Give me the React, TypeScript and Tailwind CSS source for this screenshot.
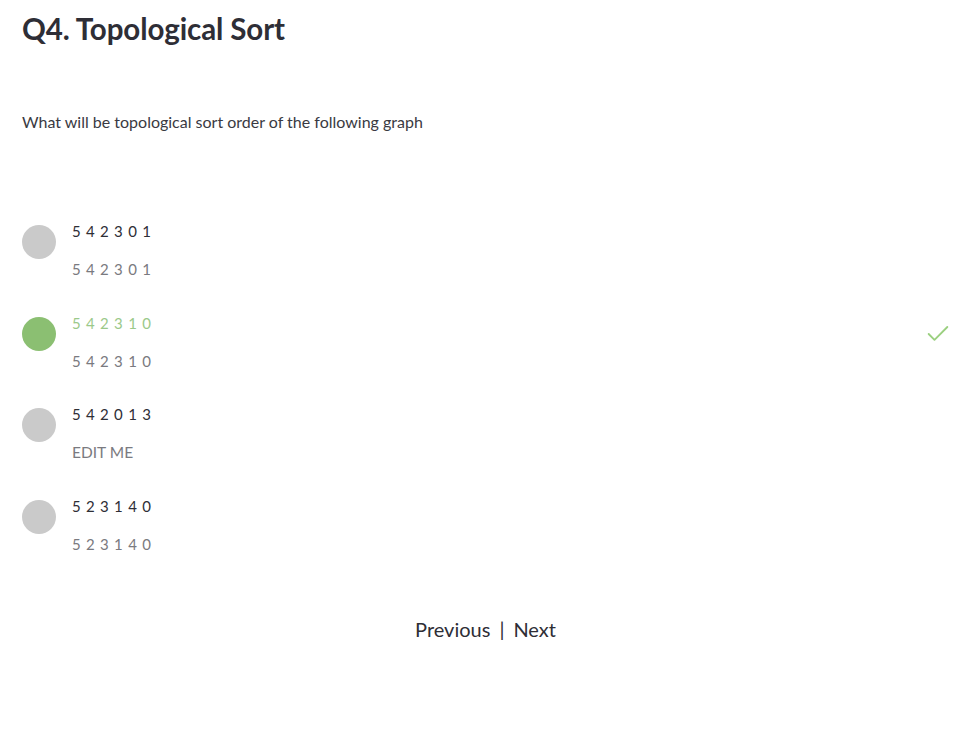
import { Check } from "lucide-react";

const options = [
  { label: "5 4 2 3 0 1", sub: "5 4 2 3 0 1", correct: false },
  { label: "5 4 2 3 1 0", sub: "5 4 2 3 1 0", correct: true },
  { label: "5 4 2 0 1 3", sub: "EDIT ME", correct: false },
  { label: "5 2 3 1 4 0", sub: "5 2 3 1 4 0", correct: false },
];

const App = () => {
  return (
    <div className="w-[976px] h-[756px] bg-white px-[22px] font-['Lato','Noto_Sans',sans-serif] text-[#2e2e36]">
      <h1 className="pt-[10px] text-[29.5px] font-bold leading-[38px] tracking-[-0.1px]">
        Q4. Topological Sort
      </h1>
      <p className="mt-[64px] text-[16px] leading-[20px] text-[#3a3a42]">
        What will be topological sort order of the following graph
      </p>

      <div className="mt-[89px] flex flex-col gap-[33.5px]">
        {options.map((o) => (
          <div key={o.label} className="flex items-start">
            <div
              className={
                o.correct
                  ? "mt-[4px] w-[34px] h-[34px] rounded-full bg-[#8bbf72] shrink-0"
                  : "mt-[4px] w-[34px] h-[34px] rounded-full bg-[#cacaca] shrink-0"
              }
            />
            <div className="ml-[16px] flex-1 flex flex-col gap-[18px]">
              <span
                className={
                  o.correct
                    ? "text-[15px] leading-[20px] tracking-[0.05em] text-[#9bc98a]"
                    : "text-[15px] leading-[20px] tracking-[0.05em] text-[#2e2e36]"
                }
              >
                {o.label}
              </span>
              <span
                className={
                  o.sub === "EDIT ME"
                    ? "text-[15.5px] leading-[20px] text-[#7a7a80]"
                    : "text-[15px] leading-[20px] tracking-[0.05em] text-[#7a7a80]"
                }
              >
                {o.sub}
              </span>
            </div>
            {o.correct && (
              <Check className="mt-[7px] mr-[2px] text-[#9bd080]" size={28} strokeWidth={1.6} />
            )}
          </div>
        ))}
      </div>

      <div className="mt-[60px] flex justify-center items-center text-[20px] text-[#2e2e36] pr-[5px]">
        <span>Previous</span>
        <span className="mx-[9px]">|</span>
        <span>Next</span>
      </div>
    </div>
  );
};

export default App;
